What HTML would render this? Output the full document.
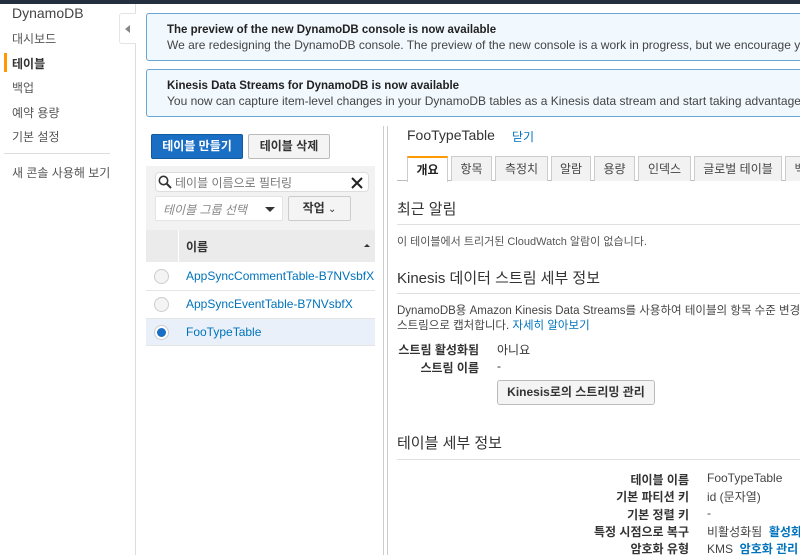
<!DOCTYPE html>
<html><head><meta charset="utf-8"><style>
*{box-sizing:border-box;margin:0;padding:0}
body{width:800px;height:555px;overflow:hidden;background:#fff;font-family:"Liberation Sans","Noto Sans CJK KR",sans-serif;font-size:12px;color:#333;position:relative}
.a{position:absolute;white-space:nowrap}
.link{color:#0073bb}
.ban{position:absolute;left:146px;width:670px;height:48px;background:#f1f8fe;border:1px solid #6aa5d8;border-radius:3px;overflow:hidden;white-space:nowrap}
.ban b{position:absolute;left:20px;top:10px;font-size:11.5px;color:#222;white-space:nowrap}
.ban .t{position:absolute;left:20px;top:24px;font-size:12px;color:#444;white-space:nowrap}
.tab{position:absolute;top:156px;height:25px;background:#f2f2f2;border:1px solid #ccc;border-bottom:none;font-size:12px;text-align:center;line-height:24px;color:#444}
.hr{position:absolute;left:397px;width:403px;height:1px;background:#e0e0e0}
.lbl{position:absolute;text-align:right;font-weight:bold;color:#333;white-space:nowrap}
</style></head><body>
<div class="a" style="left:0;top:0;width:800px;height:4px;background:#232f3e"></div>
<div class="a" style="left:135px;top:4px;width:1px;height:551px;background:#ddd"></div>
<div class="a" style="left:12px;top:5px;font-size:14px;color:#444">DynamoDB</div>
<div class="a" style="left:12px;top:30px;color:#555;font-size:12px">대시보드</div>
<div class="a" style="left:4px;top:53px;width:3px;height:19px;background:#f90"></div>
<div class="a" style="left:12px;top:55px;color:#333;font-weight:bold">테이블</div>
<div class="a" style="left:12px;top:79px;color:#555">백업</div>
<div class="a" style="left:12px;top:104px;color:#555">예약 용량</div>
<div class="a" style="left:12px;top:128px;color:#555">기본 설정</div>
<div class="a" style="left:4px;top:153px;width:106px;height:1px;background:#ddd"></div>
<div class="a" style="left:12px;top:164px;color:#555">새 콘솔 사용해 보기</div>
<div class="a" style="left:119px;top:13px;width:17px;height:31px;background:#fff;border:1px solid #e4e4e4;border-right:none;border-radius:3px 0 0 3px"></div>
<div class="a" style="left:125px;top:25px;width:0;height:0;border-top:4px solid transparent;border-bottom:4px solid transparent;border-right:5px solid #888"></div>
<div class="ban" style="top:13px"><b>The preview of the new DynamoDB console is now available</b><span class="t">We are redesigning the DynamoDB console. The preview of the new console is a work in progress, but we encourage you to <span class="link">try it</span></span></div>
<div class="ban" style="top:69px"><b>Kinesis Data Streams for DynamoDB is now available</b><span class="t">You now can capture item-level changes in your DynamoDB tables as a Kinesis data stream and start taking advantage of Kinesis</span></div>
<!-- left panel -->
<div class="a" style="left:151px;top:134px;width:92px;height:25px;background:#1a6fc4;border:1px solid #115a9f;border-radius:2px;color:#fff;font-weight:bold;text-align:center;line-height:23px">테이블 만들기</div>
<div class="a" style="left:248px;top:134px;width:82px;height:25px;background:#f4f4f4;border:1px solid #bbb;border-radius:2px;color:#333;font-weight:bold;text-align:center;line-height:23px">테이블 삭제</div>
<div class="a" style="left:146px;top:166px;width:229px;height:64px;background:#f2f2f2"></div>
<div class="a" style="left:155px;top:172px;width:214px;height:20px;background:#fff;border:1px solid #ddd;border-radius:4px"></div>
<svg class="a" style="left:158px;top:175px" width="14" height="14"><circle cx="5.5" cy="5.5" r="4.2" fill="none" stroke="#333" stroke-width="1.6"/><line x1="8.5" y1="8.5" x2="13" y2="13" stroke="#333" stroke-width="2"/></svg>
<div class="a" style="left:175px;top:174px;color:#777;font-size:12px">테이블 이름으로 필터링</div>
<svg class="a" style="left:351px;top:177px" width="12" height="12"><path d="M1 1L11 11M11 1L1 11" stroke="#222" stroke-width="2"/></svg>
<div class="a" style="left:155px;top:196px;width:128px;height:25px;background:#fff;border:1px solid #e4e4e4;border-radius:2px"></div>
<div class="a" style="left:163px;top:201px;color:#888;font-style:italic">테이블 그룹 선택</div>
<div class="a" style="left:265px;top:207px;border-left:5px solid transparent;border-right:5px solid transparent;border-top:5px solid #333"></div>
<div class="a" style="left:288px;top:196px;width:63px;height:25px;background:#f4f4f4;border:1px solid #ccc;border-radius:2px;text-align:center;line-height:23px;font-weight:bold">작업 <span style="font-weight:normal;font-size:10px">⌄</span></div>
<div class="a" style="left:146px;top:230px;width:229px;height:32px;background:#ebebeb"></div>
<div class="a" style="left:178px;top:230px;width:1px;height:32px;background:#fff"></div>
<div class="a" style="left:186px;top:238px;font-weight:bold">이름</div>
<div class="a" style="left:364px;top:244px;border-left:3px solid transparent;border-right:3px solid transparent;border-bottom:3px solid #333"></div>
<div class="a" style="left:146px;top:290px;width:229px;height:1px;background:#e5e5e5"></div>
<div class="a" style="left:146px;top:318px;width:229px;height:28px;background:#e9f0fa;border-top:1px solid #e5e5e5;border-bottom:1px solid #e5e5e5"></div>
<div class="a" style="left:154px;top:269px;width:15px;height:15px;border-radius:50%;border:1px solid #ccc;background:#f4f4f4"></div>
<div class="a" style="left:154px;top:297px;width:15px;height:15px;border-radius:50%;border:1px solid #ccc;background:#f4f4f4"></div>
<div class="a" style="left:154px;top:325px;width:15px;height:15px;border-radius:50%;border:1px solid #ccc;background:#fff"></div>
<div class="a" style="left:157px;top:328px;width:9px;height:9px;border-radius:50%;background:#1a6fc4"></div>
<div class="a link" style="left:186px;top:269px">AppSyncCommentTable-B7NVsbfX</div>
<div class="a link" style="left:186px;top:297px">AppSyncEventTable-B7NVsbfX</div>
<div class="a link" style="left:186px;top:325px">FooTypeTable</div>
<!-- divider -->
<div class="a" style="left:383px;top:126px;width:1px;height:429px;background:#ccc"></div>
<div class="a" style="left:387px;top:126px;width:1px;height:429px;background:#ccc"></div>
<!-- right -->
<div class="a" style="left:407px;top:127px;font-size:14px;color:#333">FooTypeTable</div>
<div class="a link" style="left:512px;top:128px;font-size:12px">닫기</div>
<div class="a" style="left:397px;top:180px;width:403px;height:1px;background:#bbb"></div>
<div class="tab" style="left:407px;width:41px;background:#fff;border-top:2px solid #f90;font-weight:bold;height:26px;color:#222">개요</div>
<div class="tab" style="left:451px;width:41px">항목</div>
<div class="tab" style="left:495px;width:53px">측정치</div>
<div class="tab" style="left:551px;width:40px">알람</div>
<div class="tab" style="left:594px;width:41px">용량</div>
<div class="tab" style="left:638px;width:53px">인덱스</div>
<div class="tab" style="left:694px;width:88px">글로벌 테이블</div>
<div class="tab" style="left:785px;width:30px">백</div>
<div class="a" style="left:397px;top:198px;font-size:15px;color:#333">최근 알림</div>
<div class="hr" style="top:224px"></div>
<div class="a" style="left:397px;top:233px;font-size:11px;color:#555">이 테이블에서 트리거된 CloudWatch 알람이 없습니다.</div>
<div class="a" style="left:397px;top:267px;font-size:15px;color:#333">Kinesis 데이터 스트림 세부 정보</div>
<div class="hr" style="top:293px"></div>
<div class="a" style="left:397px;top:302px;font-size:11.5px;color:#444">DynamoDB용 Amazon Kinesis Data Streams를 사용하여 테이블의 항목 수준 변경</div>
<div class="a" style="left:397px;top:317px;font-size:11.5px;color:#444">스트림으로 캡처합니다. <span class="link">자세히 알아보기</span></div>
<div class="lbl" style="left:380px;width:99px;top:341px">스트림 활성화됨</div>
<div class="a" style="left:497px;top:341px">아니요</div>
<div class="lbl" style="left:380px;width:99px;top:359px">스트림 이름</div>
<div class="a" style="left:497px;top:359px">-</div>
<div class="a" style="left:497px;top:380px;width:158px;height:25px;background:#f4f4f4;border:1px solid #bbb;border-radius:3px;text-align:center;line-height:23px;font-weight:bold;color:#333">Kinesis로의 스트리밍 관리</div>
<div class="a" style="left:397px;top:432px;font-size:15px;color:#333">테이블 세부 정보</div>
<div class="hr" style="top:459px"></div>
<div class="lbl" style="left:560px;width:129px;top:471px">테이블 이름</div>
<div class="a" style="left:707px;top:471px;color:#444">FooTypeTable</div>
<div class="lbl" style="left:560px;width:129px;top:488px">기본 파티션 키</div>
<div class="a" style="left:707px;top:488px;color:#444">id (문자열)</div>
<div class="lbl" style="left:560px;width:129px;top:506px">기본 정렬 키</div>
<div class="a" style="left:707px;top:506px;color:#444">-</div>
<div class="lbl" style="left:560px;width:129px;top:523px">특정 시점으로 복구</div>
<div class="a" style="left:707px;top:523px;color:#444">비활성화됨 <span class="link" style="font-weight:bold">&nbsp;활성화</span></div>
<div class="lbl" style="left:560px;width:129px;top:540px">암호화 유형</div>
<div class="a" style="left:707px;top:540px;color:#444">KMS <span class="link" style="font-weight:bold">&nbsp;암호화 관리</span></div>
</body></html>
